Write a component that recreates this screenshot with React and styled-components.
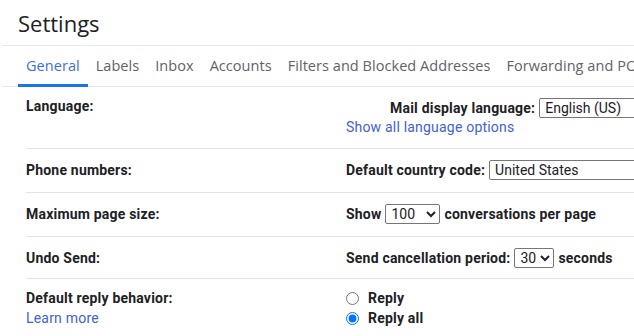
import React from "react";
import styled, { createGlobalStyle } from "styled-components";

const GlobalStyle = createGlobalStyle`
    body {
        margin: 0;
        background: #fff;
        font-family: Roboto, "Liberation Sans", sans-serif;
        color: #202124;
        letter-spacing: 0.2px;
        overflow: hidden;
    }
`;

const Page = styled.div`
    width: 634px;
    height: 336px;
    overflow: hidden;
    padding-left: 2px;
    box-sizing: border-box;
`;

const Header = styled.div`
    height: 45px;
    border-bottom: 1px solid #e8e8e8;
    display: flex;
    align-items: center;
    padding-left: 16px;
`;

const Title = styled.h1`
    margin: 0;
    font-family: "Open Sans", sans-serif;
    font-weight: 400;
    font-size: 22px;
    letter-spacing: 0;
    color: #202124;
    white-space: nowrap;
`;

const Tabs = styled.div`
    display: flex;
    height: 40px;
    border-bottom: 1px solid #e8e8e8;
    padding-left: 16px;
    white-space: nowrap;
`;

const Tab = styled.div`
    display: flex;
    align-items: center;
    padding: 0 8px;
    font-family: "Open Sans", sans-serif;
    font-size: 14.5px;
    letter-spacing: 0.05px;
    color: ${(p) => (p.active ? "#3a6fe5" : "#5f6368")};
    border-bottom: 3px solid ${(p) => (p.active ? "#1a73e8" : "transparent")};
    margin-bottom: -1px;
`;

const Rows = styled.div`
    padding-left: 24px;
`;

const Row = styled.div`
    display: flex;
    padding: ${(p) => p.pad || "11px 0 12px"};
    border-bottom: ${(p) => (p.last ? "none" : "1px solid #e3e3e3")};
    font-size: 14px;
    line-height: 20px;
    white-space: nowrap;
`;

const Label = styled.div`
    width: 320px;
    flex-shrink: 0;
    font-weight: 700;
    display: flex;
    flex-direction: column;
`;

const Link = styled.a`
    color: #4262d6;
    font-weight: 400;
    text-decoration: none;
`;

const Value = styled.div`
    display: flex;
    flex-direction: column;
`;

const Line = styled.div`
    display: flex;
    align-items: center;
    gap: 4px;
    font-weight: 700;
    margin: ${(p) => p.m || "0"};
`;

const Select = styled.select`
    font-family: Roboto, "Liberation Sans", sans-serif;
    font-size: 14px;
    color: #202124;
    height: 20px;
    padding: 0 1px;
    width: ${(p) => p.w};
    border: 1px solid #767676;
    border-radius: 2px;
    background: #fff;
`;

const Radios = styled.div`
    display: flex;
    flex-direction: column;
    font-weight: 700;
`;

const RadioLine = styled.label`
    display: flex;
    align-items: center;
    gap: 9px;

    input {
        margin: 0;
        width: 13px;
        height: 13px;
    }
`;

const tabs = [
    "General",
    "Labels",
    "Inbox",
    "Accounts",
    "Filters and Blocked Addresses",
    "Forwarding and POP/IMAP",
];

export default function App() {
    return (
        <Page>
            <GlobalStyle />
            <Header>
                <Title>Settings</Title>
            </Header>
            <Tabs>
                {tabs.map((t, i) => (
                    <Tab key={t} active={i === 0}>
                        {t}
                    </Tab>
                ))}
            </Tabs>
            <Rows>
                <Row pad="9px 0 11px">
                    <Label>Language:</Label>
                    <Value>
                        <Line m="2px 0 -1px 44px">
                            Mail display language:
                            <Select w="110px" defaultValue="en">
                                <option value="en">English (US)</option>
                            </Select>
                        </Line>
                        <Link href="#">Show all language options</Link>
                    </Value>
                </Row>
                <Row>
                    <Label>Phone numbers:</Label>
                    <Value>
                        <Line>
                            Default country code:
                            <Select w="160px" defaultValue="us">
                                <option value="us">United States</option>
                            </Select>
                        </Line>
                    </Value>
                </Row>
                <Row>
                    <Label>Maximum page size:</Label>
                    <Value>
                        <Line>
                            Show
                            <Select w="55px" defaultValue="100">
                                <option value="100">100</option>
                            </Select>
                            conversations per page
                        </Line>
                    </Value>
                </Row>
                <Row pad="11px 0 10px">
                    <Label>Undo Send:</Label>
                    <Value>
                        <Line>
                            Send cancellation period:
                            <Select w="40px" defaultValue="30">
                                <option value="30">30</option>
                            </Select>
                            seconds
                        </Line>
                    </Value>
                </Row>
                <Row pad="9px 0" last>
                    <Label>
                        Default reply behavior:
                        <Link href="#">Learn more</Link>
                    </Label>
                    <Radios>
                        <RadioLine>
                            <input type="radio" name="reply" />
                            Reply
                        </RadioLine>
                        <RadioLine>
                            <input type="radio" name="reply" defaultChecked />
                            Reply all
                        </RadioLine>
                    </Radios>
                </Row>
            </Rows>
        </Page>
    );
}
